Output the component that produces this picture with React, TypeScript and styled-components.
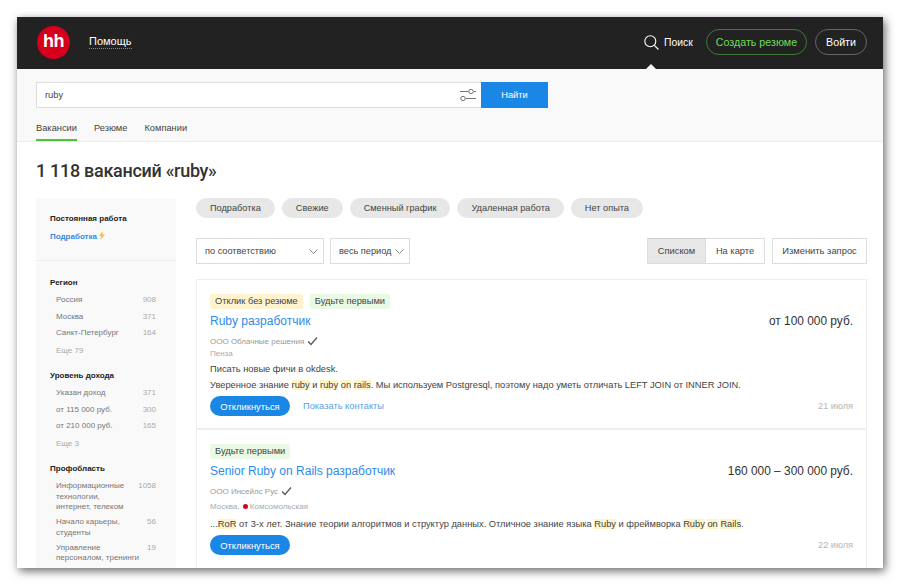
import styled, { createGlobalStyle } from 'styled-components'

const GlobalStyle = createGlobalStyle`
  html, body {
    margin: 0;
    padding: 0;
    background: #fff;
    overflow: hidden;
  }
  * { box-sizing: border-box; }
`

const Frame = styled.div`
  width: 900px;
  height: 586px;
  padding: 17px;
  font-family: "Liberation Sans", Arial, sans-serif;
`

const Window = styled.div`
  width: 866px;
  height: 551px;
  overflow: hidden;
  background: #fff;
  box-shadow: 2px 3px 9px rgba(0, 0, 0, 0.6);
`

const TopBar = styled.header`
  position: relative;
  height: 52px;
  background: #222;
  display: flex;
  align-items: center;
  padding: 0 16px 2px 20px;
`

const Logo = styled.div`
  width: 33px;
  height: 33px;
  border-radius: 50%;
  background: #d6001c;
  color: #fff;
  font-size: 18px;
  font-weight: 700;
  letter-spacing: -0.5px;
  display: flex;
  align-items: center;
  justify-content: center;
  padding-bottom: 1px;
`

const HelpLink = styled.a`
  margin-left: 19px;
  color: #fff;
  font-size: 11px;
  border-bottom: 1px dotted #888;
  line-height: 13px;
`

const TopRight = styled.div`
  margin-left: auto;
  display: flex;
  align-items: center;
`

const SearchLink = styled.a`
  display: flex;
  align-items: center;
  gap: 5px;
  color: #fff;
  font-size: 10.4px;
  margin-right: 13px;
`

const Notch = styled.span`
  position: absolute;
  left: 629px;
  bottom: 0;
  width: 0;
  height: 0;
  border-left: 5px solid transparent;
  border-right: 5px solid transparent;
  border-bottom: 5px solid #f9f9f9;
`

const Pill = styled.a<{ $green?: boolean }>`
  height: 26px;
  padding: 0 ${p => (p.$green ? '9px' : '10px')};
  border-radius: 13px;
  display: flex;
  align-items: center;
  font-size: 10.7px;
  color: ${p => (p.$green ? '#6fdc5a' : '#fff')};
  border: 1px solid ${p => (p.$green ? '#3f7a38' : '#666')};
  margin-left: ${p => (p.$green ? '0' : '8px')};
`

const SearchBand = styled.section`
  height: 73px;
  background: #f9f9f9;
  border-bottom: 1px solid #ececec;
  padding: 13px 19px 0;
`

const SearchRow = styled.div`
  display: flex;
  width: 512px;
  height: 26px;
`

const SearchInput = styled.div`
  flex: 1;
  background: #fff;
  border: 1px solid #ddd;
  border-right: 0;
  display: flex;
  align-items: center;
  justify-content: space-between;
  padding: 0 5px 0 8px;
  font-size: 9.3px;
  color: #444;
`

const SearchButton = styled.button`
  width: 67px;
  border: 0;
  background: #1a87e6;
  color: #fff;
  font-family: inherit;
  font-size: 9.3px;
  padding: 0;
`

const Tabs = styled.nav`
  display: flex;
  gap: 17px;
  margin-top: 13px;
`

const Tab = styled.a<{ $active?: boolean }>`
  height: 20px;
  line-height: 14px;
  font-size: 9.3px;
  color: #444;
  border-bottom: 2px solid ${p => (p.$active ? '#4bc63c' : 'transparent')};
`

const PageTitle = styled.h1`
  margin: 0;
  padding: 16px 19px 0;
  height: 56px;
  font-family: Roboto, sans-serif;
  font-size: 18px;
  line-height: 25px;
  font-weight: 500;
  letter-spacing: -0.3px;
  color: #333;
`

const Columns = styled.div`
  display: flex;
  gap: 20px;
  padding: 0 16px 0 19px;
`

const Sidebar = styled.aside`
  width: 140px;
  flex: none;
  height: 372px;
  background: #f9f9f9;
`

const SideBlock = styled.div<{ $divided?: boolean }>`
  padding: ${p => (p.$divided ? '16px 14px 0' : '15px 14px 18px')};
  border-bottom: ${p => (p.$divided ? '0' : '1px solid #eee')};
`

const SideHeading = styled.div`
  font-size: 8px;
  line-height: 11px;
  font-weight: 700;
  color: #222;
`

const PartTime = styled.a`
  display: block;
  margin-top: 7px;
  font-size: 8px;
  line-height: 11px;
  font-weight: 700;
  color: #2f8be8;
`

const Bolt = styled.svg`
  margin-left: 2px;
  vertical-align: -1px;
`

const FacetList = styled.ul`
  list-style: none;
  margin: 0;
  padding: 7px 6px 0;
`

const Facet = styled.li<{ $gap: number }>`
  display: flex;
  justify-content: space-between;
  gap: 8px;
  margin-bottom: ${p => p.$gap}px;
  font-size: 8px;
  line-height: 10.5px;
  color: #777;
`

const FacetName = styled.span`
  max-width: 84px;
`

const FacetCount = styled.span`
  color: #aaa;
`

const More = styled.div`
  padding: 0.5px 6px 0;
  margin-bottom: 14px;
  font-size: 8px;
  line-height: 11px;
  color: #aaa;
`

const Main = styled.main`
  flex: 1;
  min-width: 0;
`

const Chips = styled.div`
  display: flex;
  gap: 7px;
  height: 20px;
`

const Chip = styled.a`
  height: 20px;
  padding: 0 14px;
  border-radius: 10px;
  background: #e7e7e7;
  color: #444;
  font-size: 9.2px;
  line-height: 20px;
`

const Controls = styled.div`
  display: flex;
  margin-top: 20px;
  height: 26px;
`

const Select = styled.div<{ $width: number }>`
  width: ${p => p.$width}px;
  margin-right: 6px;
  background: #fff;
  border: 1px solid #ddd;
  display: flex;
  align-items: center;
  justify-content: space-between;
  padding: 0 5px 0 8px;
  font-size: 9.2px;
  color: #444;
`

const Segment = styled.a<{ $active?: boolean; $width: number }>`
  width: ${p => p.$width}px;
  text-align: center;
  font-size: 9.3px;
  line-height: 24px;
  color: #444;
  background: ${p => (p.$active ? '#e7e7e7' : '#fff')};
  border: 1px solid #ddd;
  border-left: ${p => (p.$active ? '1px solid #ddd' : '0')};
  border-top-color: ${p => (p.$active ? '#ccc' : '#ddd')};
`

const ChangeQuery = styled.a`
  width: 95px;
  margin-left: 7px;
  text-align: center;
  font-size: 9.4px;
  line-height: 24px;
  color: #444;
  background: #fff;
  border: 1px solid #ddd;
`

const Spacer = styled.div`
  flex: 1;
`

const Results = styled.div`
  margin-top: 15px;
  border: 1px solid #eee;
`

const Vacancy = styled.article`
  padding: 14px 13px 0;
  height: 150px;
  border-bottom: 2px solid #eee;
`

const TagRow = styled.div`
  display: flex;
  gap: 7px;
`

const Tag = styled.span<{ $kind: 'yellow' | 'green' }>`
  height: 15px;
  padding: 0 5px;
  border-radius: 2px;
  font-size: 9.3px;
  line-height: 15px;
  color: #444;
  background: ${p => (p.$kind === 'yellow' ? '#fff3cf' : '#e9f9e3')};
`

const TitleRow = styled.div`
  display: flex;
  justify-content: space-between;
  align-items: center;
  margin-top: 3px;
  height: 18px;
`

const VacancyTitle = styled.a`
  font-size: 12px;
  color: #2f8be8;
`

const Salary = styled.span`
  font-size: 11.9px;
  color: #333;
`

const Company = styled.div`
  margin-top: 4px;
  display: flex;
  align-items: center;
  gap: 3px;
  height: 14px;
  font-size: 8px;
  color: #999;
`

const Place = styled.div<{ $spaced?: boolean }>`
  margin-top: ${p => (p.$spaced ? '3px' : '0')};
  height: 11px;
  font-size: 8px;
  line-height: 11px;
  color: #aaa;
`

const MetroDot = styled.span`
  display: inline-block;
  width: 5px;
  height: 5px;
  margin: 0 2px 0 1px;
  border-radius: 50%;
  background: #d6001c;
`

const Description = styled.p<{ $spaced?: boolean }>`
  margin: ${p => (p.$spaced ? '4px' : '2px')} 0 0;
  font-size: 9.3px;
  line-height: 16px;
  color: #444;
`

const Mark = styled.mark`
  background: #fff3c8;
  color: inherit;
`

const ActionRow = styled.div`
  display: flex;
  align-items: center;
  margin-top: 3px;
`

const Respond = styled.button`
  width: 80px;
  height: 20px;
  padding: 0;
  border: 0;
  border-radius: 10px;
  background: #1a87e6;
  color: #fff;
  font-family: inherit;
  font-size: 9.4px;
`

const Contacts = styled.a`
  margin-left: 13px;
  font-size: 9.3px;
  color: #5a9fe0;
`

const DateLabel = styled.span`
  margin-left: auto;
  font-size: 9.2px;
  color: #b5b5b5;
`

const SearchIcon = () => (
  <svg width="15" height="15" viewBox="0 0 15 15" fill="none" stroke="#fff" strokeWidth="1.100">
    <circle cx="6.300" cy="6.300" r="5.500" />
    <path d="M10.300 10.300l4.200 4.200" />
  </svg>
)

const SlidersIcon = () => (
  <svg width="16" height="12" viewBox="0 0 16 12" fill="none" stroke="#777" strokeWidth="1">
    <path d="M0 2.500h8.500M13.500 2.500H16M0 9.500h.5M5.500 9.500H16" />
    <circle cx="11" cy="2.500" r="2.200" />
    <circle cx="3" cy="9.500" r="2.200" />
  </svg>
)

const Chevron = () => (
  <svg width="9" height="5" viewBox="0 0 9 5" fill="none" stroke="#888" strokeWidth="1">
    <path d="M.5.500l4 4 4-4" />
  </svg>
)

const Check = () => (
  <svg width="11" height="9" viewBox="0 0 11 9" fill="none" stroke="#555" strokeWidth="1.200">
    <path d="M1 4.500l3 3 6-7" />
  </svg>
)

const regions = [['Россия', '908'], ['Москва', '371'], ['Санкт-Петербург', '164']]
const incomes = [['Указан доход', '371'], ['от 115 000 руб.', '300'], ['от 210 000 руб.', '165']]
const areas = [
  ['Информационные технологии, интернет, телеком', '1058'],
  ['Начало карьеры, студенты', '56'],
  ['Управление персоналом, тренинги', '19'],
]
const chips = ['Подработка', 'Свежие', 'Сменный график', 'Удаленная работа', 'Нет опыта']

function Facets({ items, gap = 6 }: { items: string[][]; gap?: number }) {
  return (
    <FacetList>
      {items.map(([name, count]) => (
        <Facet key={name} $gap={gap}>
          <FacetName>{name}</FacetName>
          <FacetCount>{count}</FacetCount>
        </Facet>
      ))}
    </FacetList>
  )
}

function App() {
  return (
    <Frame>
      <GlobalStyle />
      <Window>
        <TopBar>
          <Logo>hh</Logo>
          <HelpLink>Помощь</HelpLink>
          <TopRight>
            <SearchLink><SearchIcon />Поиск</SearchLink>
            <Pill $green>Создать резюме</Pill>
            <Pill>Войти</Pill>
          </TopRight>
          <Notch />
        </TopBar>

        <SearchBand>
          <SearchRow>
            <SearchInput>
              ruby
              <SlidersIcon />
            </SearchInput>
            <SearchButton>Найти</SearchButton>
          </SearchRow>
          <Tabs>
            <Tab $active>Вакансии</Tab>
            <Tab>Резюме</Tab>
            <Tab>Компании</Tab>
          </Tabs>
        </SearchBand>

        <PageTitle>1 118 вакансий «ruby»</PageTitle>

        <Columns>
          <Sidebar>
            <SideBlock>
              <SideHeading>Постоянная работа</SideHeading>
              <PartTime>
                Подработка
                <Bolt width="6" height="9" viewBox="0 0 6 9"><path d="M3.500 0L0 5h2.200L1.500 9 6 3.500H3.500z" fill="#f5c242" /></Bolt>
              </PartTime>
            </SideBlock>
            <SideBlock $divided>
              <SideHeading>Регион</SideHeading>
              <Facets items={regions} />
              <More>Еще 79</More>
              <SideHeading>Уровень дохода</SideHeading>
              <Facets items={incomes} />
              <More>Еще 3</More>
              <SideHeading>Профобласть</SideHeading>
              <Facets items={areas} gap={4.500} />
            </SideBlock>
          </Sidebar>

          <Main>
            <Chips>
              {chips.map(chip => <Chip key={chip}>{chip}</Chip>)}
            </Chips>
            <Controls>
              <Select $width={128}>по соответствию<Chevron /></Select>
              <Select $width={80}>весь период<Chevron /></Select>
              <Spacer />
              <Segment $active $width={59}>Списком</Segment>
              <Segment $width={59}>На карте</Segment>
              <ChangeQuery>Изменить запрос</ChangeQuery>
            </Controls>
            <Results>
              <Vacancy>
                <TagRow>
                  <Tag $kind="yellow">Отклик без резюме</Tag>
                  <Tag $kind="green">Будьте первыми</Tag>
                </TagRow>
                <TitleRow>
                  <VacancyTitle>Ruby разработчик</VacancyTitle>
                  <Salary>от 100 000 руб.</Salary>
                </TitleRow>
                <Company>ООО Облачные решения <Check /></Company>
                <Place>Пенза</Place>
                <Description>
                  Писать новые фичи в okdesk.<br />
                  Уверенное знание <Mark>ruby</Mark> и <Mark>ruby</Mark> <Mark>on</Mark> <Mark>rails</Mark>. Мы используем Postgresql, поэтому надо уметь отличать LEFT JOIN от INNER JOIN.
                </Description>
                <ActionRow>
                  <Respond>Откликнуться</Respond>
                  <Contacts>Показать контакты</Contacts>
                  <DateLabel>21 июля</DateLabel>
                </ActionRow>
              </Vacancy>
              <Vacancy>
                <TagRow>
                  <Tag $kind="green">Будьте первыми</Tag>
                </TagRow>
                <TitleRow>
                  <VacancyTitle>Senior Ruby on Rails разработчик</VacancyTitle>
                  <Salary>160 000 – 300 000 руб.</Salary>
                </TitleRow>
                <Company>ООО Инсейлс Рус <Check /></Company>
                <Place $spaced>Москва, <MetroDot />Комсомольская</Place>
                <Description $spaced>
                  ...<Mark>RoR</Mark> от 3-х лет. Знание теории алгоритмов и структур данных. Отличное знание языка <Mark>Ruby</Mark> и фреймворка <Mark>Ruby</Mark> <Mark>on</Mark> <Mark>Rails</Mark>.
                </Description>
                <ActionRow>
                  <Respond>Откликнуться</Respond>
                  <DateLabel>22 июля</DateLabel>
                </ActionRow>
              </Vacancy>
            </Results>
          </Main>
        </Columns>
      </Window>
    </Frame>
  )
}

export default App
